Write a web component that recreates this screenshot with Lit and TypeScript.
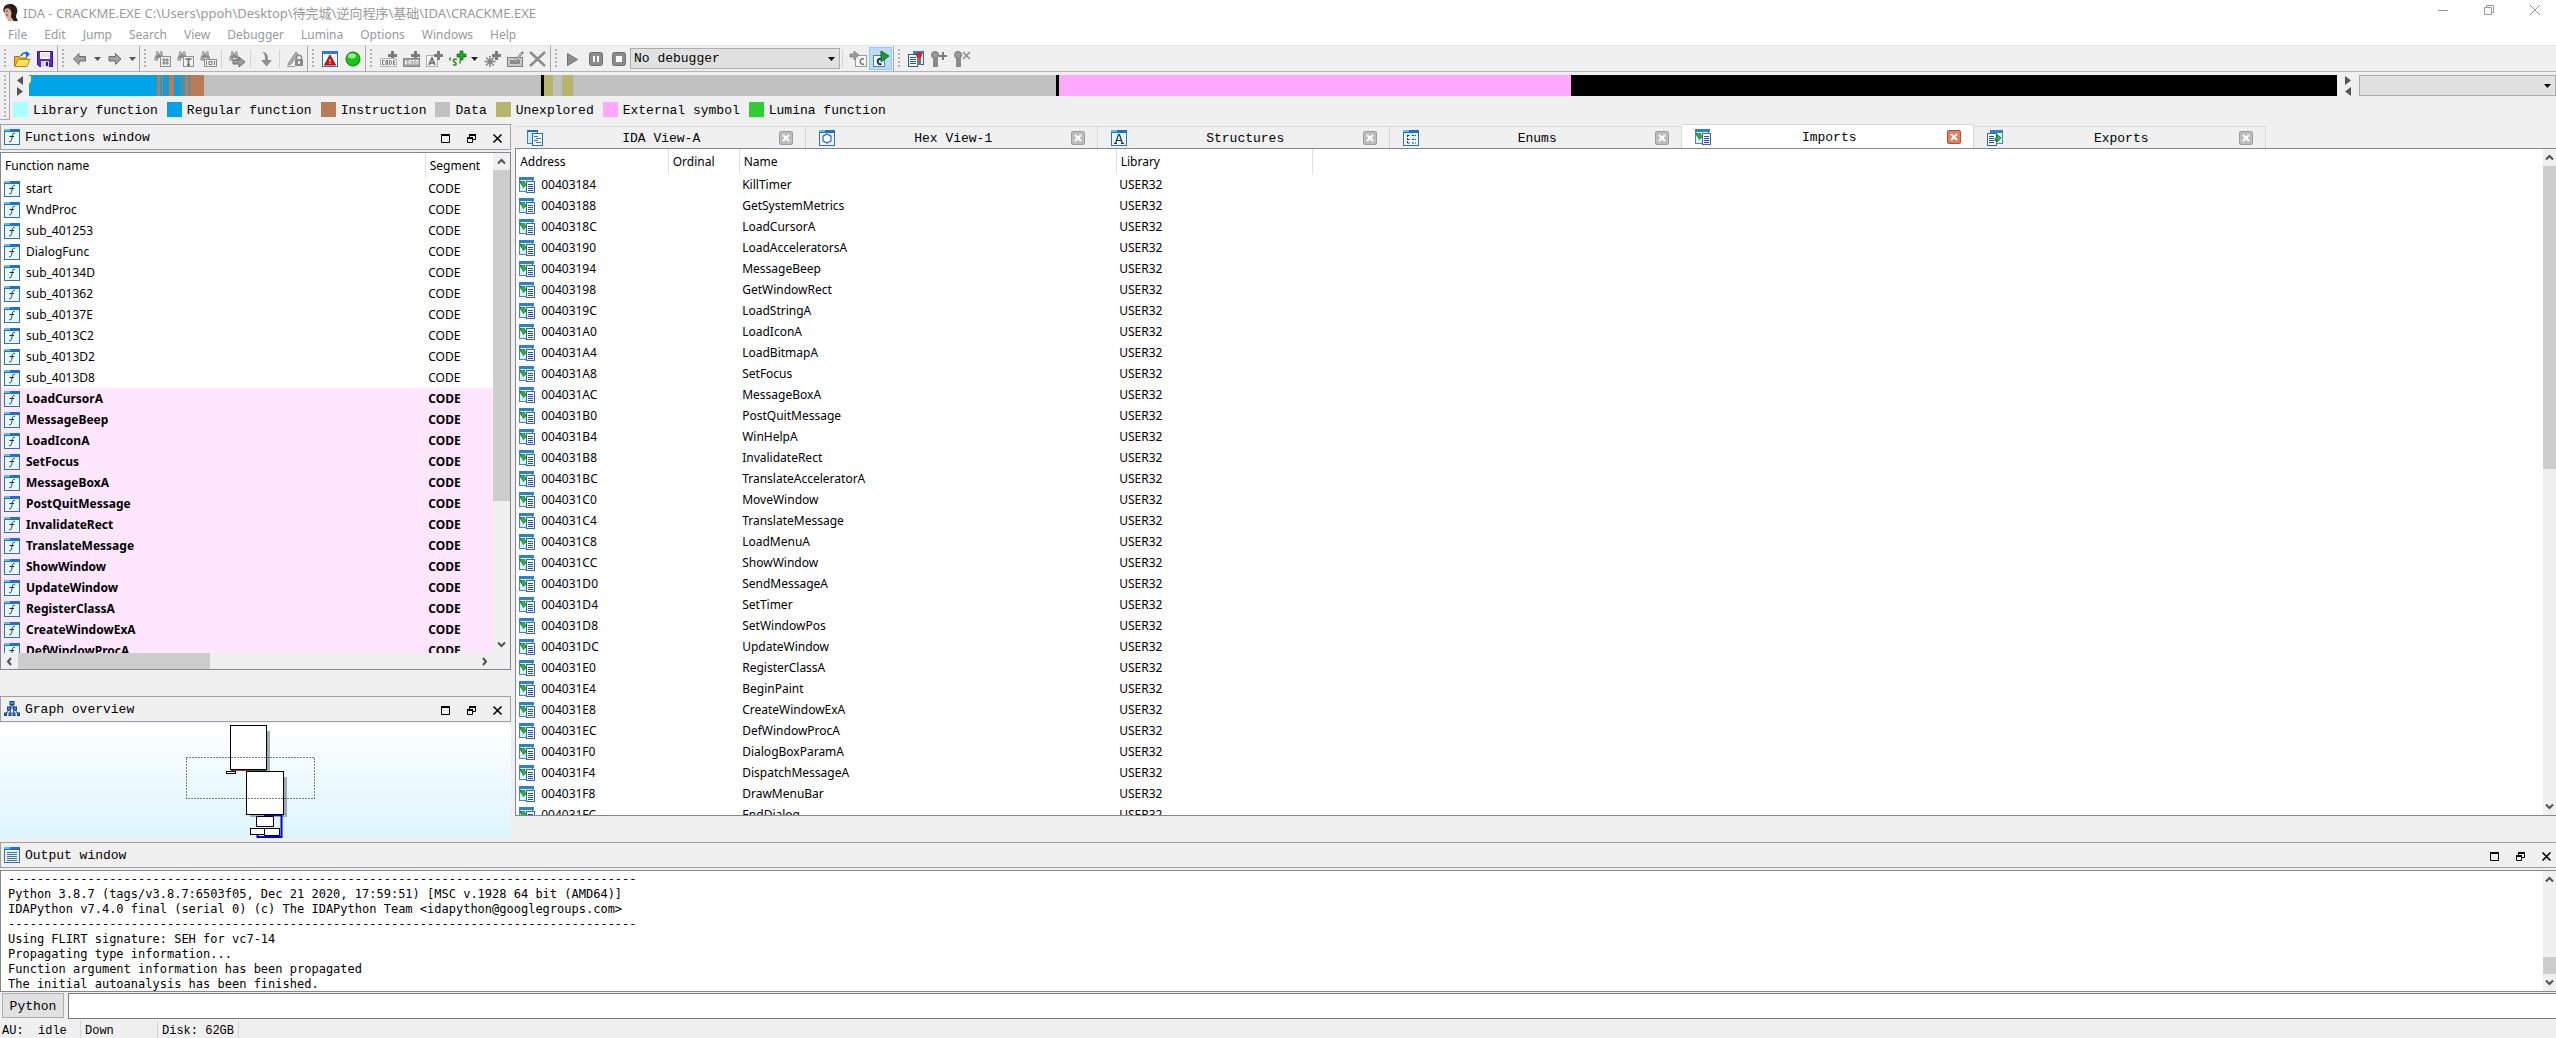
import { LitElement, html, svg, css, nothing } from "lit";
import { customElement, property, state } from "lit/decorators.js";
import { classMap } from "lit/directives/class-map.js";

const frame = svg`
  <rect x="0.5" y="0.5" width="15" height="15" fill="#e6f9ff" stroke="#3a6ea5"/>
  <rect x="0" y="0" width="16" height="3" fill="#1f6fd0"/>
  <rect x="0" y="0" width="6" height="2" fill="#56c4f0"/>`;

const binoculars = svg`
  <path d="M2 0.500h2.500v2h1.500v-2h2.500v3l1.500 3v3H6.500V7H4v2.500H0.500v-3l1.500-3z" fill="#8a8a8a"/>
  <path d="M3 1.500v3M7 1.500v3M2 6.500v2M8 6.500v2" stroke="#d4d4d4"/>`;

const plus = svg`<path d="M11 0h3v3h3v3h-3v3h-3V6H8V3h3z" fill="#7c7c7c"/>`;

const cArrowBox = svg`<rect x="5.5" y="4.5" width="11" height="11" fill="#f6f6f6" stroke="#9a9a9a"/>`;

const shapes: Record<string, unknown> = {
  portrait: svg`
    <path d="M4 1C8-1 14 0 15 5c1 4-1 5-1 8l2 4H9L4 10C0 8 1 3 4 1z" fill="#2a1a17"/>
    <path d="M3 4c2-1 5 0 6 3 1 3 0 5 0 6l3 4H6l-1-3C3 13 2 9 3 4z" fill="#d9ae98"/>
    <path d="M2 3c2-2 6-2 8 0l-1 3C7 4 5 4 3 5z" fill="#3b2420"/>
    <path d="M4 7h2M4 11h2" stroke="#7a3c30"/>`,
  open: svg`
    <path d="M0.5 15V5.5h5l1 1.5H13v2" fill="#f2b51f" stroke="#a87200"/>
    <path d="M1 15.500L4 8.500h12L13 15.500z" fill="#ffe262" stroke="#b98509"/>
    <path d="M7 5c1-3 4-4 6-2" fill="none" stroke="#1456c8" stroke-width="1.500"/>
    <path d="M12 0l4 3-4 4z" fill="#1a62d8"/>`,
  save: svg`
    <path d="M0.500 0.500h15v15h-13l-2-2z" fill="#5a2bd0" stroke="#3312a0"/>
    <rect x="3" y="1" width="10" height="7" fill="#fff"/>
    <path d="M4 3h8M4 5h8" stroke="#d0c8e8"/>
    <rect x="4" y="10" width="8" height="6" fill="#d9d4ec"/>
    <rect x="9" y="11" width="2" height="4" fill="#3312a0"/>`,
  left: svg`<path d="M1.500 8L7 2.500V5.500h6.500v4.500H7v3.500z" fill="#a2a2a2" stroke="#6c6c6c"/>`,
  right: svg`<path d="M14 8L8.500 2.500V5.500H2v4.500h6.500v3.500z" fill="#a2a2a2" stroke="#6c6c6c"/>`,
  findHash: svg`${binoculars}
    <rect x="6.500" y="5.500" width="10" height="10" fill="#f2f2f2" stroke="#909090"/>
    <path d="M10 7v7M13 7v7M8 9h7M8 12h7" stroke="#777"/>`,
  findText: svg`${binoculars}
    <rect x="6.500" y="5.500" width="10" height="10" fill="#f2f2f2" stroke="#909090"/>
    <path d="M8.500 8h6M11.500 8v6M10 14h3" stroke="#666" stroke-width="1.500"/>`,
  findBytes: svg`${binoculars}
    <rect x="4.500" y="8.500" width="12" height="7" fill="#f2f2f2" stroke="#909090"/>
    <path d="M6.500 10v4M14.500 10v4M9 10.500h3v3H9z" fill="none" stroke="#777"/>`,
  findNext: svg`${binoculars}<path d="M4 9h6V6l6 5-6 5v-3H4z" fill="#9c9c9c" stroke="#6f6f6f"/>`,
  down: svg`<path d="M4 1c5 0 6 3 6 8h4l-5.500 6.500L3 9h4c0-4 0-6-3-8z" fill="#8e8e8e"/>`,
  lock: svg`
    <path d="M1 13L9 1l2 2-7 10-3 1z" fill="#b0b0b0" stroke="#8a8a8a"/><path d="M0 15.500h8" stroke="#999"/>
    <rect x="8" y="8" width="8" height="7" fill="#8c8c8c"/>
    <path d="M9.500 9V6.500c0-3 5-3 5 0V9" fill="none" stroke="#8c8c8c" stroke-width="1.500"/>
    <rect x="11" y="10" width="2" height="3" fill="#e8e8e8"/>`,
  warn: svg`
    <rect x="0.500" y="0.500" width="15" height="15" fill="#fff" stroke="#2a6cc0"/>
    <rect x="0" y="0" width="16" height="3" fill="#2b7be0"/>
    <path d="M8 4l5.500 10h-11z" fill="#d81818" stroke="#8e0b0b"/>
    <path d="M8 8v3M8 12v1" stroke="#fff"/>`,
  green: svg`
    <circle cx="8" cy="8" r="7" fill="#15c815" stroke="#0c7a0c"/>
    <ellipse cx="7" cy="5" rx="4" ry="2.500" fill="#8ff58f"/>`,
  code: svg`${plus}
    <rect x="0.500" y="7.500" width="16" height="8" fill="#f0f0f0" stroke="#b8b8b8"/>
    <path d="M4.500 9.500h-2v4h2M6 9.500h1.500v4H6zM9.500 9.500h1l1 1v2l-1 1h-1zM15 9.500h-1.500v4H15M14 11.500h1" fill="none" stroke="#777"/>`,
  data: svg`${plus}
    <rect x="0.500" y="7.500" width="16" height="8" fill="#a0a0a0" stroke="#858585"/>
    <path d="M2.500 9.500l1.500 1v2l-1.500 1zM6 13.500v-4h2v4M6 11.500h2M9 9.500h3M10.500 9.500v4M13 13.500v-4h2v4" fill="none" stroke="#f3f3f3"/>`,
  letterA: svg`
    <rect x="0.500" y="4.500" width="11" height="11" fill="#f3f3f3" stroke="#b0b0b0"/>
    <path d="M3 14L6 7l3 7M4 12h4" fill="none" stroke="#666" stroke-width="1.500"/>${plus}`,
  str: svg`
    <path d="M11 0h3v3h3v3h-3v3h-3V6H8V3h3z" fill="#18b018" stroke="#0a5c0a" stroke-width="0.700"/>
    <path d="M8 8.500c-3-1.500-5 1-2.500 2.500s2.500 4-1.500 2.500M1 6.500v3M11 9.500v3" fill="none" stroke="#3f8f22" stroke-width="1.600"/>`,
  star: svg`${plus}<path d="M6 5v11M0.500 10.500h11M2 6.500l8 8M10 6.500l-8 8" stroke="#858585" stroke-width="1.500"/>`,
  edit: svg`
    <rect x="0.500" y="6.500" width="15" height="9" fill="#c8c8c8" stroke="#7d7d7d"/>
    <rect x="3" y="9" width="10" height="4" fill="#8a8a8a"/>
    <path d="M8 10L16 1" stroke="#7a7a7a" stroke-width="2.500"/><path d="M8 10L15 2" stroke="#eee"/>`,
  cross: svg`<path d="M0 1l15 14M15 1L0 15" stroke="#8c8c8c" stroke-width="2.500"/>`,
  play: svg`<path d="M2.500 2.500l10 6-10 6z" fill="#8e8e8e" stroke="#707070"/>`,
  pause: svg`<rect x="1.500" y="1.500" width="13" height="13" rx="2" fill="#8c8c8c" stroke="#6f6f6f"/><path d="M6 5v6M10 5v6" stroke="#fff" stroke-width="2"/>`,
  stop: svg`<rect x="1.500" y="1.500" width="13" height="13" rx="2" fill="#8c8c8c" stroke="#6f6f6f"/><rect x="5" y="5" width="6" height="6" fill="#fff"/>`,
  intoC: svg`${cArrowBox}
    <path d="M14 8c-5-2-5 7 0 5" fill="none" stroke="#777" stroke-width="1.500"/>
    <path d="M0 3h4V0l5 4-5 5V6H0z" fill="#9a9a9a" stroke="#777" stroke-width="0.700"/>`,
  runC: svg`
    <rect x="0.500" y="4.500" width="11" height="11" fill="#fff" stroke="#4a7fc0"/>
    <path d="M8.500 8c-5-2-5 7 0 5" fill="none" stroke="#0b2a80" stroke-width="2"/>
    <path d="M8 0l8 5-8 6z" fill="#1f9a3a" stroke="#0f6a22"/>`,
  watch: svg`
    <rect x="5.500" y="0.500" width="10" height="13" fill="#eaf4ff" stroke="#2a62b8"/>
    <rect x="5" y="0" width="11" height="3" fill="#2f7fe0"/>
    <rect x="0.500" y="3.500" width="9" height="12" fill="#fff" stroke="#2455a8"/>
    <path d="M2 6.500h6M2 8.500h6M2 10.500h6M2 12.500h6" stroke="#23509c"/>
    <rect x="9" y="6" width="4" height="8" fill="#777"/><circle cx="11" cy="4" r="3" fill="#e02222"/>`,
  watchAdd: svg`<circle cx="4" cy="4" r="3.500" fill="#999" stroke="#777"/><rect x="2" y="7" width="5" height="9" fill="#8a8a8a"/><path d="M12 1v8M8 5h8" stroke="#7c7c7c" stroke-width="2"/>`,
  watchDel: svg`<circle cx="4" cy="4" r="3.500" fill="#999" stroke="#777"/><rect x="2" y="7" width="5" height="9" fill="#8a8a8a"/><path d="M9 1l7 7M16 1L9 8" stroke="#8c8c8c" stroke-width="1.500"/>`,
  func: svg`${frame}<path d="M11 4.500c-2-0.800-2.500 0.500-3 4s-1 5-3 4M5.500 7.500h4.500" fill="none" stroke="#1a2d50"/>`,
  graph: svg`
    <path d="M8 4v4M3 12l2-4M13 12l-2-4M7 12l-2-4M9 12l2-4M5 6l3-2 3 2" stroke="#1f4f9c" fill="none"/>
    <g fill="#4f93ea" stroke="#123f8c"><rect x="6" y="0.500" width="4" height="3"/><rect x="3.500" y="6" width="3" height="3"/><rect x="9.500" y="6" width="3" height="3"/>
    <rect x="0.500" y="12" width="2" height="2.500"/><rect x="5" y="12" width="2" height="2.500"/><rect x="9" y="12" width="2" height="2.500"/><rect x="13.500" y="12" width="2" height="2.500"/></g>`,
  output: svg`${frame}<path d="M3 5.500h10M3 7.500h10M3 9.500h10M3 11.500h10M3 13.500h10" stroke="#4a6a9a"/>`,
  ida: svg`
    <rect x="0.500" y="0.500" width="10" height="13" fill="#c9ecfb" stroke="#3d7cc0"/><rect x="0" y="0" width="11" height="2" fill="#1f6fd0"/>
    <rect x="5.500" y="3.500" width="10" height="12" fill="#eefaff" stroke="#2a6bb4"/>
    <path d="M7 6.500h4M9 8.500h5M7 10.500h4M9 12.500h5" stroke="#4a6fa8"/>`,
  hex: svg`${frame}<path d="M8 4l4 2.200v4.600L8 13l-4-2.200V6.200z" fill="#fff" stroke="#3a58e0" stroke-width="1.200"/>`,
  struct: svg`${frame}<path d="M4.500 13.500L7.500 4.500h1l3 9M6 10.500h4M3 13.500h3M10 13.500h3" fill="none" stroke="#1c3050" stroke-width="1.200"/>`,
  enums: svg`${frame}<path d="M4.500 5v8M4.500 5.500h3M4.500 9.500h3M4.500 13h3M9 5.500h4M9 9.500h4M9 13h4" stroke="#1c3f70" stroke-dasharray="2 1" fill="none"/>`,
  imports: svg`
    <rect x="0.500" y="0.500" width="13" height="14" fill="#d9f2fb" stroke="#4a86c0"/><rect x="0" y="0" width="15" height="3" fill="#2c84c8"/>
    <rect x="7.500" y="4.500" width="8" height="11" fill="#fff" stroke="#3a62b8"/>
    <path d="M9 7.500h5M9 9.500h5M9 11.500h5M9 13.500h5" stroke="#1f4fa8"/>
    <path d="M1 4l3 1 1-1 2 4-3 2.500V9L2 7z" fill="#2fb83a" stroke="#0b5a18" stroke-width="0.700"/>`,
  exports: svg`
    <rect x="3.500" y="0.500" width="12" height="13" fill="#d9f2fb" stroke="#4a86c0"/><rect x="3" y="0" width="13" height="3" fill="#2c84c8"/>
    <rect x="0.500" y="3.500" width="9" height="12" fill="#fff" stroke="#3a62b8"/>
    <path d="M2 6.500h5M2 8.500h5M2 10.500h5M2 12.500h5" stroke="#1f4fa8"/>
    <path d="M8 11c0-4 1-4 2-4V4.500l4 3.500-4 4V9.500z" fill="#2fb83a" stroke="#0b5a18" stroke-width="0.700"/>`,
};

const icon = (name: string) =>
  html`<svg class="icon" width="16" height="16" viewBox="0 0 16 16" aria-hidden="true">${shapes[name]}</svg>`;

const caret = html`<svg class="caret" width="7" height="4" viewBox="0 0 7 4" aria-hidden="true"><path d="M0 0h7L3.500 4z" fill="currentColor"/></svg>`;

const shared = css`
  * { box-sizing: border-box; }
  button {
    font: inherit; color: inherit; background: none; border: 0; padding: 0; margin: 0;
    display: flex; align-items: center; justify-content: center;
  }
  svg { display: block; flex: none; overflow: visible; }
`;

/** Classic scroll bar: two arrow buttons and a thumb placed by percentages. */
@customElement("scroll-strip")
class ScrollStrip extends LitElement {
  @property({ type: Boolean, reflect: true }) horizontal = false;
  @property({ type: Number }) start = 0;
  @property({ type: Number }) size = 50;
  static styles = [shared, css`
    :host { display: flex; flex-direction: column; background: #f0f0f0; min-width: 0; min-height: 0; overflow: hidden; color: #505050; }
    :host([horizontal]) { flex-direction: row; }
    .arrow { flex: 0 0 17px; }
    .track { flex: 1; display: flex; flex-direction: inherit; min-width: 0; min-height: 0; }
    .thumb { background: #cdcdcd; flex: none; }
  `];
  render() {
    const h = this.horizontal;
    const a = (d: string) => html`<svg width="9" height="9" viewBox="0 0 9 9"><path d=${d} fill="none" stroke="currentColor" stroke-width="2"/></svg>`;
    const dim = h ? "width" : "height";
    return html`
      <button class="arrow" aria-label=${h ? "Scroll left" : "Scroll up"}>${a(h ? "M6 1L3 4.500L6 8" : "M1 6.500L4.500 3L8 6.500")}</button>
      <div class="track">
        <div style="${dim}:${this.start}%"></div>
        <div class="thumb" style="${dim}:${this.size}%"></div>
      </div>
      <button class="arrow" aria-label=${h ? "Scroll right" : "Scroll down"}>${a(h ? "M3 1L6 4.500L3 8" : "M1 2.500L4.500 6L8 2.500")}</button>`;
  }
}

/** Title strip of a docked panel. */
@customElement("dock-title")
class DockTitle extends LitElement {
  @property() icon = "func";
  @property() label = "";
  static styles = [shared, css`
    :host { display: flex; align-items: center; flex: none; height: 26px; padding-left: 3px; border: 1px solid #a0a0a0;
      font: 13px/16px "Liberation Mono", monospace; }
    .label { flex: 1; margin: 0; padding: 2px 0 0 5px; font: inherit; }
    .btn { width: 26px; height: 20px; padding-top: 2px; }
  `];
  render() {
    return html`
      ${icon(this.icon)}
      <h2 class="label">${this.label}</h2>
      <button class="btn" aria-label="Maximize"><svg width="9" height="9" viewBox="0 0 9 9"><path d="M0.500 1v7.500h8V1" fill="none" stroke="#000"/><path d="M0 1h9" stroke="#000" stroke-width="2"/></svg></button>
      <button class="btn" aria-label="Restore"><svg width="9" height="9" viewBox="0 0 9 9"><path d="M3 1h5.500v4.500H6M2.500 0v3M0.500 4v4.500h5V4" fill="none" stroke="#000"/><path d="M2 1h7M0 4h6" stroke="#000" stroke-width="2"/></svg></button>
      <button class="btn" aria-label="Close"><svg width="9" height="9" viewBox="0 0 9 9"><path d="M0.500 0.500l8 8M8.500 0.500l-8 8" stroke="#000" stroke-width="1.600"/></svg></button>`;
  }
}

const menus = ["File", "Edit", "Jump", "Search", "View", "Debugger", "Lumina", "Options", "Windows", "Help"];

type Tool = [icon: string, label: string] | "|" | "v" | "V" | "select";
const toolGroups: Tool[][] = [
  [["open", "Open"], ["save", "Save"]],
  [["left", "Back"], "v", ["right", "Forward"], "v"],
  [["findHash", "Search value"], ["findText", "Search text"], ["findBytes", "Search bytes"], "|", ["findNext", "Next match"], "|", ["down", "Jump"], "|", ["lock", "Lock highlight"]],
  [["warn", "Problems"], ["green", "Analysis"]],
  [["code", "Make code"], ["data", "Make data"], ["letterA", "Make name"], ["str", "Make string"], "V", ["star", "Make array"], ["edit", "Edit"], ["cross", "Undefine"]],
  [["play", "Run"], ["pause", "Pause"], ["stop", "Stop"], "select", "|", ["intoC", "Step into source"], ["runC", "Source debugging"]],
  [["watch", "Breakpoints"], ["watchAdd", "Add breakpoint"], ["watchDel", "Delete breakpoint"]],
];

const BLUE = "#00a2e8", BROWN = "#b97a57", GRAY = "#c0c0c0", OLIVE = "#b5b56b", PINK = "#ffa6ff", BLACK = "#000000", MIX = "#4b8fa8";
const bands: [string, number][] = [
  [BLUE, 128], [BROWN, 3], [MIX, 1], [BLUE, 1], [BROWN, 1], [BLUE, 3], [MIX, 1], [BLUE, 2], [BROWN, 5], [BLUE, 4],
  [MIX, 2], [BLUE, 1], [MIX, 4], [BROWN, 4], [BLUE, 1], [BROWN, 14], [GRAY, 337], [BLACK, 3], [OLIVE, 9], [GRAY, 9],
  [OLIVE, 11], [GRAY, 483], [BLACK, 3], [PINK, 512], [BLACK, 766],
];

const legend: [string, string][] = [
  ["#aaffff", "Library function"], [BLUE, "Regular function"], [BROWN, "Instruction"], [GRAY, "Data"],
  [OLIVE, "Unexplored"], [PINK, "External symbol"], ["#32cd32", "Lumina function"],
];

const localFunctions = ["start", "WndProc", "sub_401253", "DialogFunc", "sub_40134D", "sub_401362", "sub_40137E", "sub_4013C2", "sub_4013D2", "sub_4013D8"];
const externalFunctions = ["LoadCursorA", "MessageBeep", "LoadIconA", "SetFocus", "MessageBoxA", "PostQuitMessage", "InvalidateRect",
  "TranslateMessage", "ShowWindow", "UpdateWindow", "RegisterClassA", "CreateWindowExA", "DefWindowProcA"];

const importNames = ["KillTimer", "GetSystemMetrics", "LoadCursorA", "LoadAcceleratorsA", "MessageBeep", "GetWindowRect", "LoadStringA",
  "LoadIconA", "LoadBitmapA", "SetFocus", "MessageBoxA", "PostQuitMessage", "WinHelpA", "InvalidateRect", "TranslateAcceleratorA",
  "MoveWindow", "TranslateMessage", "LoadMenuA", "ShowWindow", "SendMessageA", "SetTimer", "SetWindowPos", "UpdateWindow",
  "RegisterClassA", "BeginPaint", "CreateWindowExA", "DefWindowProcA", "DialogBoxParamA", "DispatchMessageA", "DrawMenuBar", "EndDialog"];
const address = (i: number) => (0x403184 + i * 4).toString(16).toUpperCase().padStart(8, "0");

const tabs: [string, string][] = [["ida", "IDA View-A"], ["hex", "Hex View-1"], ["struct", "Structures"], ["enums", "Enums"], ["imports", "Imports"], ["exports", "Exports"]];

const rule = "-".repeat(87);
const log = [
  rule,
  "Python 3.8.7 (tags/v3.8.7:6503f05, Dec 21 2020, 17:59:51) [MSC v.1928 64 bit (AMD64)]",
  "IDAPython v7.4.0 final (serial 0) (c) The IDAPython Team <idapython@googlegroups.com>",
  rule,
  "Using FLIRT signature: SEH for vc7-14",
  "Propagating type information...",
  "Function argument information has been propagated",
  "The initial autoanalysis has been finished.",
].join("\n");

@customElement("app-root")
class AppRoot extends LitElement {
  @state() active = 4;

  static styles = [shared, css`
    :host {
      display: flex; flex-direction: column; height: 100vh; overflow: hidden; background: #f0f0f0; color: #000;
      font: 12px/16px "Noto Sans", "Noto Sans CJK SC", sans-serif;
    }
    .mono { font: 13px/16px "Liberation Mono", monospace; }

    .title { display: flex; align-items: center; flex: none; height: 25px; padding-left: 2px; gap: 5px; background: #fff; color: #999; }
    .title-text { flex: 1; margin: 0; font: 13px/16px "Noto Sans", "Noto Sans CJK SC", sans-serif; }
    .win { width: 46px; height: 20px; }
    .wins { display: flex; align-self: flex-start; margin-right: -2px; }
    .menu { display: flex; flex: none; height: 20px; gap: 1px; background: #fff; color: #999; }
    .menu-item { padding: 0 8px; }

    .tools { display: flex; flex: none; height: 27px; border-top: 1px solid #e4e4e4; border-bottom: 1px solid #b4b4b4; }
    .group { display: flex; align-items: center; padding: 0 1px 0 4px; border-right: 1px solid #a8a8a8; }
    .group:last-child { border-right: 0; }
    .grip { width: 2px; height: 20px; margin-right: 4px; background: repeating-linear-gradient(#b4b4b4 0 2px, transparent 2px 4px); }
    .tool { width: 23px; height: 23px; }
    .tool.on { background: #bcdcf4; border: 1px solid #90c8f6; }
    .drop { width: 12px; height: 23px; color: #555; }
    .drop.dark { color: #222; }
    .sep { width: 6px; height: 18px; border-left: 1px solid #d4d4d4; margin-left: 2px; margin-right: -2px; }
    .pick { display: grid; align-items: center; }
    .pick > * { grid-area: 1 / 1; }
    .pick .caret { justify-self: end; margin-right: 5px; pointer-events: none; }
    select { appearance: none; width: 100%; height: 21px; border: 1px solid #adadad; border-radius: 0; background: #e1e1e1; padding: 0 3px; color: #000; outline: 0; }
    .debugger { width: 210px; }

    .nav { display: flex; flex: none; height: 52px; }
    .nav-grip { width: 10px; height: 48px; padding: 3px 4px; border-right: 1px solid #a8a8a8; border-bottom: 1px solid #a8a8a8; }
    .nav-grip .grip { height: 42px; }
    .nav-main { flex: 1; min-width: 0; padding-top: 3px; }
    .nav-row { display: flex; align-items: center; height: 21px; }
    .steps { width: 19px; display: flex; flex-direction: column; align-items: center; gap: 2px; }
    .steps.end { width: 22px; }
    .bands { flex: 1; display: flex; height: 21px; position: relative; }
    .cursor { position: absolute; left: 0; top: 1px; }
    .segment { width: 197px; }
    .legend { display: flex; gap: 9px; margin: 6px 0 0 3px; padding: 0; list-style: none; }
    .legend-item { display: flex; gap: 5px; align-items: center; height: 15px; }
    .swatch { width: 15px; height: 15px; }
    .legend-text { padding-top: 2px; }

    .work { flex: 1; display: flex; gap: 3px; min-height: 0; padding-bottom: 4px; }
    .side { flex: 0 0 20%; display: flex; flex-direction: column; min-width: 0; }
    .functions { flex: 1; min-height: 0; margin: 2px 0 26px; display: grid; grid-template: minmax(0, 1fr) 16px / minmax(0, 1fr) 17px; border: 1px solid #828790; background: #f0f0f0; }
    .clip { overflow: hidden; background: #fff; }
    table { border-collapse: collapse; table-layout: fixed; width: 100%; text-align: left; }
    th { font-weight: 400; height: 25px; padding: 0 4px; border-right: 1px solid #e0e0e0; }
    .functions th:last-child { border-right: 0; }
    td { height: 21px; padding: 0 4px 0 3px; white-space: nowrap; }
    .cell { display: flex; align-items: center; gap: 6px; }
    .ext { background: #ffe6ff; font-weight: 700; }
    .c-seg { width: 68px; }
    .canvas { flex: none; height: 115px; margin-top: 1px; display: flex; justify-content: center; background: linear-gradient(#fff, #ddf5fd); }

    .views { flex: 1; min-width: 0; display: flex; flex-direction: column; padding-bottom: 22px; }
    .tabs { display: flex; align-items: flex-end; flex: none; height: 24px; }
    .tab { flex: 0 1 292px; height: 22px; display: flex; align-items: center; padding: 0 12px 0 13px; border: 1px solid #d9d9d9; border-bottom: 0; border-left: 0; }
    .tab.on { background: #fff; height: 24px; }
    .tab-label { flex: 1; padding-top: 2px; }
    .shut { width: 14px; height: 14px; border-radius: 2px; background: #bdbdbd; border: 1px solid #9c9c9c; }
    .tab.on .shut { background: #e0805f; border-color: #c4482c; }
    .sheet { flex: 1; min-height: 0; display: flex; margin-left: 1px; border: 1px solid #828790; border-right: 0; background: #fff; }
    .sheet .clip { flex: 1; }
    .sheet scroll-strip { flex: 0 0 13px; }
    .c-addr { width: 152px; } .c-ord { width: 71px; } .c-name { width: 377px; } .c-lib { width: 196px; }
    .sheet th:last-child { border-right: 0; }

    .wide { margin-right: -4px; }
    .log { flex: none; display: flex; height: 122px; margin-top: 2px; border: 1px solid #828790; border-right: 0; background: #fff; }
    .log-text { flex: 1; margin: 0; padding: 1px 7px; overflow: hidden; font: 12px/15px "DejaVu Sans Mono", monospace; }
    .log scroll-strip { flex: 0 0 13px; }
    .prompt { display: flex; flex: none; gap: 4px; padding: 1px 0 0 2px; }
    .lang { width: 62px; height: 25px; padding-top: 2px; border: 1px solid #adadad; background: #e1e1e1; }
    .command { flex: 1; min-width: 0; height: 26px; border: 1px solid #7a7a7a; border-right: 0; background: #fff; padding: 0 4px; outline: 0; }
    .status { display: flex; align-items: flex-end; flex: none; height: 19px; font: 12px/14px "Liberation Mono", monospace; white-space: pre; }
    .status-cell { min-width: 77px; height: 17px; padding: 4px 4px 0; border-right: 1px solid #d4d4d4; line-height: 13px; }
    .status-cell:first-child { padding-left: 2px; min-width: 81px; }
  `];

  private tool(t: Tool) {
    if (t === "|") return html`<span class="sep"></span>`;
    if (t === "v" || t === "V") return html`<button class="drop ${t === "V" ? "dark" : ""}" aria-label="More">${caret}</button>`;
    if (t === "select") return html`<span class="pick debugger"><select class="mono" aria-label="Debugger"><option>No debugger</option></select>${caret}</span>`;
    return html`<button class=${classMap({ tool: true, on: t[0] === "runC" })} aria-label=${t[1]}>${icon(t[0])}</button>`;
  }

  private steps(end: boolean) {
    const l = "M6 0v9L0 4.500z", r = "M0 0v9l6-4.500z";
    const tri = (d: string) => svg`<path d=${d} fill="#555"/>`;
    return html`<div class="steps ${end ? "end" : ""}">
      <button aria-label="Navigate back"><svg width="6" height="9">${tri(end ? r : l)}</svg></button>
      <button aria-label="Navigate forward"><svg width="6" height="9">${tri(end ? l : r)}</svg></button>
    </div>`;
  }

  render() {
    return html`
      <header class="title">
        <svg width="16" height="17" viewBox="0 0 16 17" aria-hidden="true">${shapes.portrait}</svg>
        <h1 class="title-text">IDA - CRACKME.EXE C:\\Users\\ppoh\\Desktop\\待完城\\逆向程序\\基础\\IDA\\CRACKME.EXE</h1>
        <div class="wins">
          <button class="win" aria-label="Minimize"><svg width="10" height="10"><path d="M0 5.500h10" stroke="#999"/></svg></button>
          <button class="win" aria-label="Restore"><svg width="10" height="10"><path d="M0.500 2.500h7v7h-7zM2.500 2.500v-2h7v7h-2" fill="none" stroke="#999"/></svg></button>
          <button class="win" aria-label="Close"><svg width="10" height="10"><path d="M0 0l10 10M10 0L0 10" stroke="#999"/></svg></button>
        </div>
      </header>
      <nav class="menu">${menus.map((m) => html`<button class="menu-item">${m}</button>`)}</nav>
      <div class="tools">
        ${toolGroups.map((g) => html`<div class="group"><span class="grip"></span>${g.map((t) => this.tool(t))}</div>`)}
      </div>

      <section class="nav">
        <div class="nav-grip"><div class="grip"></div></div>
        <div class="nav-main">
          <div class="nav-row">
            ${this.steps(false)}
            <div class="bands">
              ${bands.map(([c, n]) => html`<div style="background:${c};flex:${n} 1 0"></div>`)}
              <svg class="cursor" width="3" height="8"><path d="M0 0h2v5L0 8z" fill="#ffff80"/></svg>
            </div>
            ${this.steps(true)}
            <span class="pick segment"><select aria-label="Address range"><option></option></select>${caret}</span>
          </div>
          <ul class="legend mono">
            ${legend.map(([c, t]) => html`<li class="legend-item"><span class="swatch" style="background:${c}"></span><span class="legend-text">${t}</span></li>`)}
          </ul>
        </div>
      </section>

      <main class="work">
        <aside class="side">
          <dock-title icon="func" label="Functions window"></dock-title>
          <div class="functions">
            <div class="clip">
              <table>
                <colgroup><col /><col class="c-seg" /></colgroup>
                <thead><tr><th>Function name</th><th>Segment</th></tr></thead>
                <tbody>
                  ${[...localFunctions, ...externalFunctions].map((f, i) => html`
                    <tr class=${i >= localFunctions.length ? "ext" : ""}>
                      <td><span class="cell">${icon("func")}${f}</span></td><td>CODE</td>
                    </tr>`)}
                </tbody>
              </table>
            </div>
            <scroll-strip .start=${0} .size=${71}></scroll-strip>
            <scroll-strip horizontal .start=${0} .size=${42}></scroll-strip>
          </div>
          <dock-title icon="graph" label="Graph overview"></dock-title>
          <div class="canvas">
            <svg width="140" height="115" viewBox="0 0 140 115" role="img" aria-label="Graph overview">
              <g fill="#8a9aa0" opacity="0.8"><rect x="48" y="8" width="36" height="40"/><rect x="64" y="54" width="37" height="40"/></g>
              <path d="M45 47.500h20" stroke="#b03030"/><path d="M65 47.500h15" stroke="#207020"/>
              <path d="M78 92h17.500v22H71.500v-4" fill="none" stroke="#0000e0" stroke-width="2"/>
              <g fill="#fff" stroke="#000">
                <rect x="44.500" y="2.500" width="36" height="44"/>
                <rect x="60.500" y="48.500" width="37" height="43"/>
                <rect x="40.500" y="48.500" width="9" height="2"/>
                <rect x="70.500" y="93.500" width="17" height="10"/>
                <rect x="64.500" y="105.500" width="15" height="6"/>
                <rect x="78.500" y="105.500" width="15" height="7"/>
              </g>
              <rect x="0.500" y="34.500" width="128" height="41" fill="none" stroke="#000" stroke-dasharray="1 2"/>
            </svg>
          </div>
        </aside>

        <section class="views">
          <div class="tabs mono">
            ${tabs.map(([ic, label], i) => html`
              <div class=${classMap({ tab: true, on: i === this.active })}>
                ${icon(ic)}
                <button class="tab-label" @click=${() => (this.active = i)}>${label}</button>
                <button class="shut" aria-label="Close ${label}"><svg width="6" height="6"><path d="M0 0l6 6M6 0L0 6" stroke="#fff" stroke-width="2"/></svg></button>
              </div>`)}
          </div>
          <div class="sheet">
            <div class="clip">
              <table>
                <colgroup><col class="c-addr" /><col class="c-ord" /><col class="c-name" /><col class="c-lib" /><col /></colgroup>
                <thead><tr><th>Address</th><th>Ordinal</th><th>Name</th><th>Library</th><th></th></tr></thead>
                <tbody>
                  ${importNames.map((n, i) => html`<tr><td><span class="cell">${icon("imports")}${address(i)}</span></td><td>${nothing}</td><td>${n}</td><td>USER32</td><td></td></tr>`)}
                </tbody>
              </table>
            </div>
            <scroll-strip .start=${0} .size=${48}></scroll-strip>
          </div>
        </section>
      </main>

      <dock-title class="wide" icon="output" label="Output window"></dock-title>
      <div class="log"><pre class="log-text">${log}</pre><scroll-strip .start=${80} .size=${20}></scroll-strip></div>
      <form class="prompt mono" @submit=${(e: Event) => e.preventDefault()}>
        <button class="lang" type="button">Python</button>
        <input class="command mono" type="text" aria-label="Python command" />
      </form>
      <footer class="status"><span class="status-cell">AU:  idle</span><span class="status-cell">Down</span><span class="status-cell">Disk: 62GB</span></footer>
    `;
  }
}
